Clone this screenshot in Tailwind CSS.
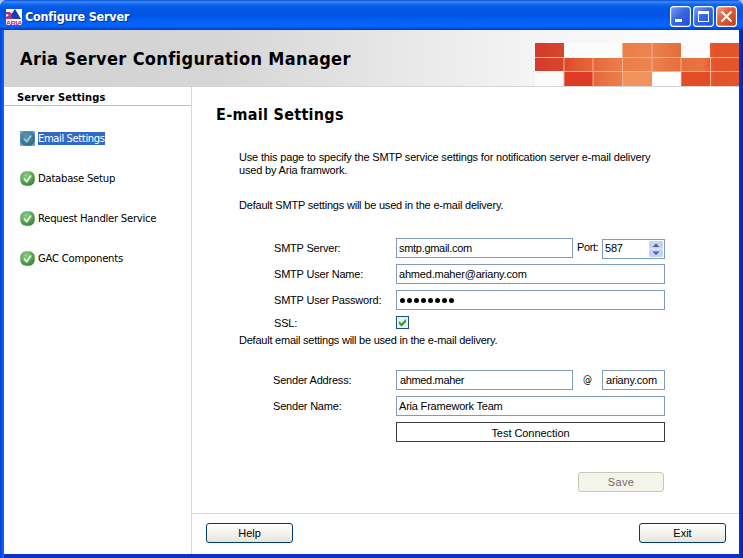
<!DOCTYPE html>
<html lang="en">
<head>
<meta charset="utf-8">
<title>Configure Server</title>
<script src="https://cdn.jsdelivr.net/npm/@tailwindcss/browser@4"></script>
</head>
<body class="w-[743px] h-[558px] overflow-hidden bg-[#a9c3f3]">
<svg class="absolute w-0 h-0">
  <defs>
    <radialGradient id="green" cx="40%" cy="30%" r="75%"><stop offset="0" stop-color="#8fd08a"/><stop offset=".6" stop-color="#55a553"/><stop offset="1" stop-color="#39803c"/></radialGradient>
    <radialGradient id="blue" cx="40%" cy="30%" r="75%"><stop offset="0" stop-color="#5797ac"/><stop offset="1" stop-color="#2c6c8d"/></radialGradient>
  </defs>
</svg>
<div class="w-full h-full flex flex-col rounded-t-[7px] overflow-hidden bg-[linear-gradient(to_right,#0040d8_0px,#1460f0_3px,#1460f0_4px,#0b3fd0_738px,#0020b0_743px)] text-black text-[11px] leading-[13px] font-['Liberation_Sans',Arial,sans-serif] whitespace-nowrap tracking-[-0.2px]">
  <header class="h-[30px] shrink-0 flex items-center pl-[6px] pr-[6px] pt-[3px] bg-[linear-gradient(to_bottom,#0a4fd0_0px,#3c8cf8_2px,#1268ee_4px,#0257e4_8px,#0055e5_16px,#0462fb_22px,#0466ff_26px,#0050dc_28px,#003dc8_30px)]">
    <svg class="w-4 h-4 shrink-0" viewBox="0 0 16 16">
      <rect width="16" height="16" fill="#fff"/>
      <path d="M9 0L15 10H2Z" fill="#1b3fb0"/>
      <path d="M0 3h4l2 2-2 2 4 3H0V8l3-2-3-1z" fill="#b8307f"/>
      <rect y="10" width="16" height="6" fill="#fff"/>
      <text x="0" y="15.6" font-size="6" font-weight="bold" textLength="16" lengthAdjust="spacingAndGlyphs" fill="#b0147c" font-family="Liberation Sans, sans-serif">ARIA</text>
    </svg>
    <h1 class="ml-[3px] mt-px text-[12.5px] leading-[16px] font-bold text-white font-['DejaVu_Sans_Condensed','DejaVu_Sans',sans-serif] [text-shadow:1px_1px_1px_#0b2f8a] tracking-[-0.22px]">Configure Server</h1>
    <div class="ml-auto flex gap-[2px]">
      <svg class="w-[21px] h-[21px]" viewBox="0 0 21 21"><defs><linearGradient id="b" x2="1" y2="1"><stop stop-color="#7d9ff2"/><stop offset=".45" stop-color="#3767e4"/><stop offset="1" stop-color="#1f4fd0"/></linearGradient></defs><rect x=".6" y=".6" width="19.8" height="19.8" rx="3" fill="url(#b)" stroke="#fff" stroke-width="1.1"/><rect x="5" y="13" width="7" height="3" fill="#fff"/></svg>
      <svg class="w-[21px] h-[21px]" viewBox="0 0 21 21"><rect x=".6" y=".6" width="19.8" height="19.8" rx="3" fill="url(#b)" stroke="#fff" stroke-width="1.1"/><path d="M5 5h11v11H5zM6 8v7h9V8z" fill="#fff" fill-rule="evenodd"/></svg>
      <svg class="w-[21px] h-[21px]" viewBox="0 0 21 21"><defs><linearGradient id="r" x2="1" y2="1"><stop stop-color="#f0a48b"/><stop offset=".4" stop-color="#e0603c"/><stop offset="1" stop-color="#c03a14"/></linearGradient></defs><rect x=".6" y=".6" width="19.8" height="19.8" rx="3" fill="url(#r)" stroke="#fff" stroke-width="1.1"/><path d="M5.5 5.5l10 10M15.500 5.500l-10 10" stroke="#fff" stroke-width="2.2"/></svg>
    </div>
  </header>
  <div class="grow flex flex-col mx-1 mb-1 bg-white [box-shadow:0_4px_0_#0734c8]">
    <div class="h-[57px] shrink-0 flex justify-between border-b border-[#d4d4d4] bg-[linear-gradient(to_right,#d2d2d2_0%,#d6d6d6_30%,#f3f3f3_70%,#ffffff_100%)]">
      <h2 class="ml-4 mt-[17px] text-[18px] leading-[24px] font-bold font-['DejaVu_Sans_Condensed','DejaVu_Sans',sans-serif] tracking-[0.35px]">Aria Server Configuration Manager</h2>
      <svg class="w-[204px] h-[43px] mt-[13px]" viewBox="0 0 204 43">
        <defs>
          <linearGradient id="o" gradientUnits="userSpaceOnUse" x1="0" x2="204"><stop stop-color="#d23c2c"/><stop offset=".14" stop-color="#d8452c"/><stop offset=".2" stop-color="#e2592f"/><stop offset=".4" stop-color="#ea7c48"/><stop offset=".56" stop-color="#ec8450"/><stop offset=".7" stop-color="#e66f3e"/><stop offset=".82" stop-color="#ea7440"/><stop offset=".88" stop-color="#e35229"/><stop offset="1" stop-color="#e2562c"/></linearGradient>
        </defs>
        <rect x="29" width="58" height="15" fill="#fff" opacity=".6"/>
        <rect y="28" width="29" height="15" fill="#fff" opacity=".6"/>
        <path d="M0 0h29v28H0zM87 0h59v28H87zM175 0h29v43h-29zM29 15h58v28H29zM87 28h30v15H87zM146 15h29v28h-29z" fill="url(#o)"/>
        <rect x="29" y="28" width="29" height="15" fill="#df3a26"/>
        <rect x="87" y="28" width="30" height="15" fill="#f0925c"/>
        <rect x="146" y="28" width="29" height="15" fill="#e24d27"/>
        <path d="M29 15v28M58 15v28M87.500 0v43M117 0v28M146 15v28M175.500 15v28M0 14.500h29M87 14.500h59M175 14.500h29M29 28.500h175" stroke="#f3b090" stroke-width="1" fill="none"/>
        <rect x="117.500" y="29" width="28" height="14" fill="#fff"/>
      </svg>
    </div>
    <div class="grow flex">
      <nav class="w-[188px] shrink-0 border-r border-[#d8d8dc]">
        <h3 class="h-[19px] pl-[13px] pt-[4px] border-b border-[#a9c4e2] font-bold text-[11px] leading-[13px] font-['DejaVu_Sans_Condensed','DejaVu_Sans',sans-serif] tracking-[0.1px]">Server Settings</h3>
        <ul class="pt-[24px] pl-4 flex flex-col gap-[24px] text-[11.200px] font-['DejaVu_Sans_Condensed','DejaVu_Sans',sans-serif] tracking-[-0.25px]">
          <li class="h-4 flex items-center gap-[3px]"><svg class="w-[15px] h-[15px]" viewBox="0 0 15 15"><rect width="15" height="15" fill="#7b9fc9"/><rect x=".3" y=".3" width="14.400" height="14.400" rx="5.500" fill="url(#blue)"/><path d="M4 7.500l2.700 3L11 4.500" fill="none" stroke="#a6cbd8" stroke-width="1.800"/></svg><span class="bg-[#316ac5] text-white h-[13px] leading-[14px] tracking-[-0.42px]">Email Settings</span></li>
          <li class="h-4 flex items-center gap-[3px]"><svg class="w-[15px] h-[15px]" viewBox="0 0 15 15"><rect x=".3" y=".3" width="14.400" height="14.400" rx="5.500" fill="url(#green)"/><path d="M4 7.500l2.700 3L11 4.500" fill="none" stroke="#f2fff0" stroke-width="1.800"/></svg><span>Database Setup</span></li>
          <li class="h-4 flex items-center gap-[3px]"><svg class="w-[15px] h-[15px]" viewBox="0 0 15 15"><rect x=".3" y=".3" width="14.400" height="14.400" rx="5.500" fill="url(#green)"/><path d="M4 7.500l2.700 3L11 4.500" fill="none" stroke="#f2fff0" stroke-width="1.800"/></svg><span>Request Handler Service</span></li>
          <li class="h-4 flex items-center gap-[3px]"><svg class="w-[15px] h-[15px]" viewBox="0 0 15 15"><rect x=".3" y=".3" width="14.400" height="14.400" rx="5.500" fill="url(#green)"/><path d="M4 7.500l2.700 3L11 4.500" fill="none" stroke="#f2fff0" stroke-width="1.800"/></svg><span>GAC Components</span></li>
        </ul>
      </nav>
      <main class="grow flex flex-col">
        <div class="h-[427px] shrink-0 border-b border-[#d8d8dc]">
          <h2 class="pl-6 pt-[17px] h-[64px] text-[16px] leading-[22px] font-bold font-['DejaVu_Sans_Condensed','DejaVu_Sans',sans-serif] tracking-[0.3px]">E-mail Settings</h2>
          <p class="pl-[47px] h-[48px] tracking-[-0.17px]">Use this page to specify the SMTP service settings for notification server e-mail delivery<br>used by Aria framwork.</p>
          <p class="pl-[47px] h-[39px]">Default SMTP settings will be used in the e-mail delivery.</p>
          <div class="ml-[82px] w-[391px] flex flex-col">
            <div class="h-[26px] flex items-start">
              <label class="w-[122px] pt-[4px]">SMTP Server:</label>
              <div class="w-[177px] h-5 border border-[#7f9db9] pl-[2px] pt-[3px] tracking-[-0.3px]">smtp.gmail.com</div>
              <label class="w-[29px] pl-[4px] pt-[3px] tracking-[-0.4px]">Port:</label>
              <div class="w-[63px] h-5 mt-px border border-[#7f9db9] pl-[2px] pr-px flex justify-between"><span class="pt-[2px]">587</span>
                <svg class="w-[14px] h-4 mt-px" viewBox="0 0 14 16"><rect width="14" height="16" rx="1.500" fill="#c3d3fb"/><path d="M0 8h14" stroke="#e8efff"/><path d="M3.500 6L7 2.500 10.500 6zM3.500 10.500L7 14l3.500-3.500z" fill="#4d6185"/></svg>
              </div>
            </div>
            <div class="h-[26px] flex"><label class="w-[122px] pt-[4px]">SMTP User Name:</label><div class="w-[269px] h-5 border border-[#7f9db9] pl-[2px] pt-[3px]">ahmed.maher@ariany.com</div></div>
            <div class="h-[26px] flex"><label class="w-[122px] pt-[4px]">SMTP User Password:</label>
              <div class="w-[269px] h-5 border border-[#7f9db9] pl-[3px] flex items-center gap-[2px]">
                <i class="size-[5px] rounded-full bg-black"></i><i class="size-[5px] rounded-full bg-black"></i><i class="size-[5px] rounded-full bg-black"></i><i class="size-[5px] rounded-full bg-black"></i><i class="size-[5px] rounded-full bg-black"></i><i class="size-[5px] rounded-full bg-black"></i><i class="size-[5px] rounded-full bg-black"></i><i class="size-[5px] rounded-full bg-black"></i>
              </div></div>
            <div class="h-[18px] flex"><label class="w-[122px] pt-px">SSL:</label><svg class="w-[13px] h-[13px]" viewBox="0 0 13 13"><rect x=".5" y=".5" width="12" height="12" fill="#edf1ee" stroke="#1c5180"/><path d="M3 5v3l2.500 2.500L10 6V3L5.500 7.500z" fill="#21a121"/></svg></div>
          </div>
          <p class="pl-[47px] h-[36px] tracking-[-0.23px]">Default email settings will be used in the e-mail delivery.</p>
          <div class="ml-[81px] w-[392px] flex flex-col">
            <div class="h-[26px] flex"><label class="w-[123px] pt-[4px]">Sender Address:</label><div class="w-[177px] h-5 border border-[#7f9db9] pl-[3px] pt-[3px] tracking-[-0.35px]">ahmed.maher</div><span class="w-[29px] text-center pt-[3px] text-[10px] font-['DejaVu_Sans_Condensed','DejaVu_Sans',sans-serif]">@</span><div class="w-[63px] h-5 border border-[#7f9db9] pl-[3px] pt-[3px]">ariany.com</div></div>
            <div class="h-[26px] flex"><label class="w-[123px] pt-[4px]">Sender Name:</label><div class="w-[269px] h-5 border border-[#7f9db9] pl-[2px] pt-[3px]">Aria Framework Team</div></div>
            <div class="w-[269px] h-5 self-end border border-[#3c3c3c] text-center pt-[4px] tracking-[-0.05px]">Test Connection</div>
            <div class="self-end mr-[1px] mt-[30px] w-[86px] h-5 rounded-[3px] border border-[#c9c7ba] bg-[#f5f4ea] text-[#6e6e66] text-center pt-[3px] text-[11px] tracking-[0.3px]">Save</div>
          </div>
        </div>
        <div class="grow flex justify-between items-start pl-[14px] pr-[13px] pt-[9px]">
          <div class="w-[87px] h-5 rounded-[3px] border border-[#003c74] bg-linear-to-b from-white via-[#f4f3ee] to-[#e6e4da] text-center pt-[3px] tracking-normal">Help</div>
          <div class="w-[87px] h-5 rounded-[3px] border border-[#003c74] bg-linear-to-b from-white via-[#f4f3ee] to-[#e6e4da] text-center pt-[3px] tracking-normal">Exit</div>
        </div>
      </main>
    </div>
  </div>
</div>
</body>
</html>
